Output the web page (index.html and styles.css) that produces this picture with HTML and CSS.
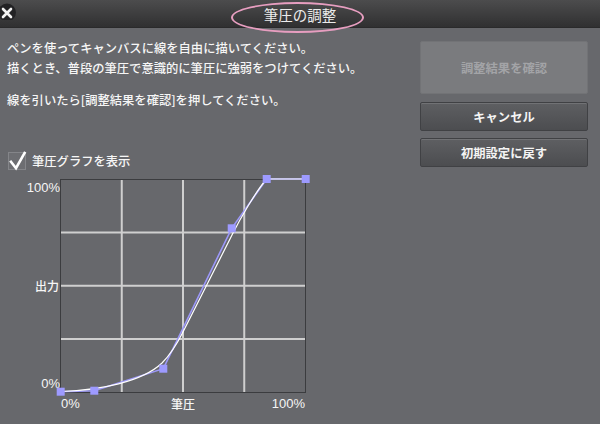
FILE: index.html
```html
<!DOCTYPE html>
<html lang="ja">
<head>
<meta charset="utf-8">
<title>筆圧の調整</title>
<link rel="stylesheet" href="styles.css">
</head>
<body>
<div class="window">
  <header class="titlebar">
    <svg class="close" width="18" height="20" viewBox="0 0 18 20">
      <circle cx="7" cy="12.5" r="9" fill="#222224"/>
      <path d="M3 9 L11 17 M11 9 L3 17" stroke="#f2f2f2" stroke-width="2.6" stroke-linecap="round"/>
    </svg>
    <h1 class="title">筆圧の調整</h1>
    <span class="ring"></span>
  </header>
  <div class="main">
    <div class="left">
      <p class="msg">ペンを使ってキャンバスに線を自由に描いてください。<br>描くとき、普段の筆圧で意識的に筆圧に強弱をつけてください。</p>
      <p class="msg msg2">線を引いたら[調整結果を確認]を押してください。</p>
      <label class="check">
        <svg class="checkbox" width="18" height="18" viewBox="0 0 18 18">
          <rect x="0.5" y="0.5" width="17" height="17" fill="#6d6e72" stroke="#848589"/>
          <path d="M2.2 8.8 L8 16.2 L17.2 -0.2" fill="none" stroke="#ffffff" stroke-width="2.6" stroke-linejoin="miter"/>
        </svg>
        <span>筆圧グラフを表示</span>
      </label>
      <div class="graph">
        <div class="yaxis"><span>100%</span><span>出力</span><span>0%</span></div>
        <div class="plot">
          <svg class="chart" width="246" height="214" viewBox="0 0 246 214">
            <g stroke="#cfcfcf" stroke-width="2">
              <line x1="61.75" y1="0" x2="61.75" y2="214"/>
              <line x1="123" y1="0" x2="123" y2="214"/>
              <line x1="184.25" y1="0" x2="184.25" y2="214"/>
              <line x1="0" y1="53.5" x2="246" y2="53.5"/>
              <line x1="0" y1="106.75" x2="246" y2="106.75"/>
              <line x1="0" y1="160" x2="246" y2="160"/>
            </g>
            <rect x="0.5" y="0.5" width="245" height="213" fill="none" stroke="#3b3c3f"/>
            <polyline points="0.7,212.7 34.3,211.7 103.3,189.7 171.7,49.3 206.7,0 245.7,0" fill="none" stroke="#9c98f8" stroke-width="1.6"/>
            <path d="M0.7,212.5 C40,211 82,203 102,184 C112,174 118,163 123,153 L172,56 C180,40 196,12 206.7,0 L245.7,0" fill="none" stroke="#ffffff" stroke-width="1.2"/>
            <g fill="#9d9aff">
              <rect x="-3.3" y="208.7" width="8" height="8"/>
              <rect x="30.3" y="207.7" width="8" height="8"/>
              <rect x="99.3" y="185.7" width="8" height="8"/>
              <rect x="167.7" y="45.3" width="8" height="8"/>
              <rect x="202.7" y="-4" width="8" height="8"/>
              <rect x="241.7" y="-4" width="8" height="8"/>
            </g>
          </svg>
          <div class="xaxis"><span class="xl">0%</span><span class="xc">筆圧</span><span class="xr">100%</span></div>
        </div>
      </div>
    </div>
    <div class="buttons">
      <button class="btn btn-disabled" type="button">調整結果を確認</button>
      <button class="btn" type="button">キャンセル</button>
      <button class="btn btn-last" type="button">初期設定に戻す</button>
    </div>
  </div>
</div>
</body>
</html>
```

FILE: styles.css
```css
html, body {
  margin: 0;
  padding: 0;
}
body {
  width: 600px;
  height: 424px;
  overflow: hidden;
  background: #67686c;
  font-family: "Noto Sans CJK JP", "Liberation Sans", sans-serif;
  color: #f2f2f2;
}
.window {
  width: 600px;
  height: 424px;
}
.titlebar {
  position: relative;
  height: 28px;
  background: linear-gradient(#4c4c4d, #303031);
  border-bottom: 1px solid #2a2a2b;
  box-sizing: border-box;
}
.close {
  position: absolute;
  left: 0;
  top: 0;
  display: block;
}
.title {
  margin: 0;
  text-align: center;
  font-size: 14.5px;
  font-weight: 400;
  line-height: 30px;
  color: #ececec;
}
.ring {
  position: absolute;
  left: 231px;
  top: 2px;
  width: 133px;
  height: 31px;
  box-sizing: border-box;
  border: 2px solid #e79ec0;
  border-radius: 50%;
}
.main {
  display: flex;
  padding: 10px 12px 0 7px;
}
.left {
  flex: 1;
}
.msg {
  margin: 0;
  font-size: 12.3px;
  font-weight: 500;
  line-height: 20px;
  color: #f6f6f6;
}
.msg2 {
  margin-top: 12px;
}
.check {
  display: flex;
  align-items: center;
  gap: 6px;
  margin-top: 42px;
  margin-left: 1px;
  height: 18px;
  font-size: 12.3px;
  font-weight: 500;
  color: #f6f6f6;
}
.checkbox {
  display: block;
  overflow: visible;
}
.graph {
  display: flex;
  margin-top: 9px;
}
.yaxis {
  width: 53px;
  height: 214px;
  box-sizing: border-box;
  padding: 1px 0 2px;
  display: flex;
  flex-direction: column;
  justify-content: space-between;
  align-items: flex-end;
  font-family: "Liberation Sans", "Noto Sans CJK JP", sans-serif;
  font-size: 13px;
  line-height: 15px;
  color: #f6f6f6;
}
.yaxis span:nth-child(2) {
  font-family: "Noto Sans CJK JP", sans-serif;
  font-size: 12px;
  font-weight: 500;
  padding-right: 1px;
}
.plot {
  width: 246px;
}
.chart {
  display: block;
  overflow: visible;
}
.xaxis {
  display: grid;
  grid-template-columns: 1fr auto 1fr;
  margin-top: 3px;
  font-family: "Liberation Sans", "Noto Sans CJK JP", sans-serif;
  font-size: 13px;
  line-height: 15px;
  color: #f6f6f6;
}
.xl {
  text-align: left;
  padding-left: 1px;
}
.xc {
  font-family: "Noto Sans CJK JP", sans-serif;
  font-size: 12px;
  font-weight: 500;
}
.xr {
  text-align: right;
  padding-right: 1px;
}
.buttons {
  width: 168px;
  margin-top: 3px;
  display: flex;
  flex-direction: column;
}
.btn {
  display: block;
  width: 168px;
  height: 29px;
  margin: 0 0 8px;
  padding: 0;
  border: 1px solid #404144;
  border-radius: 2px;
  background: linear-gradient(#5e5f62, #4c4d50);
  box-shadow: inset 0 1px 0 rgba(255,255,255,0.12);
  font-family: "Noto Sans CJK JP", sans-serif;
  font-size: 12.3px;
  font-weight: 700;
  color: #f4f4f4;
}
.btn-disabled {
  height: 53px;
  background: #7a7b7e;
  border-color: #727376;
  box-shadow: none;
  color: #a3a4a7;
}
.btn-last {
  margin-top: -1px;
}
```
